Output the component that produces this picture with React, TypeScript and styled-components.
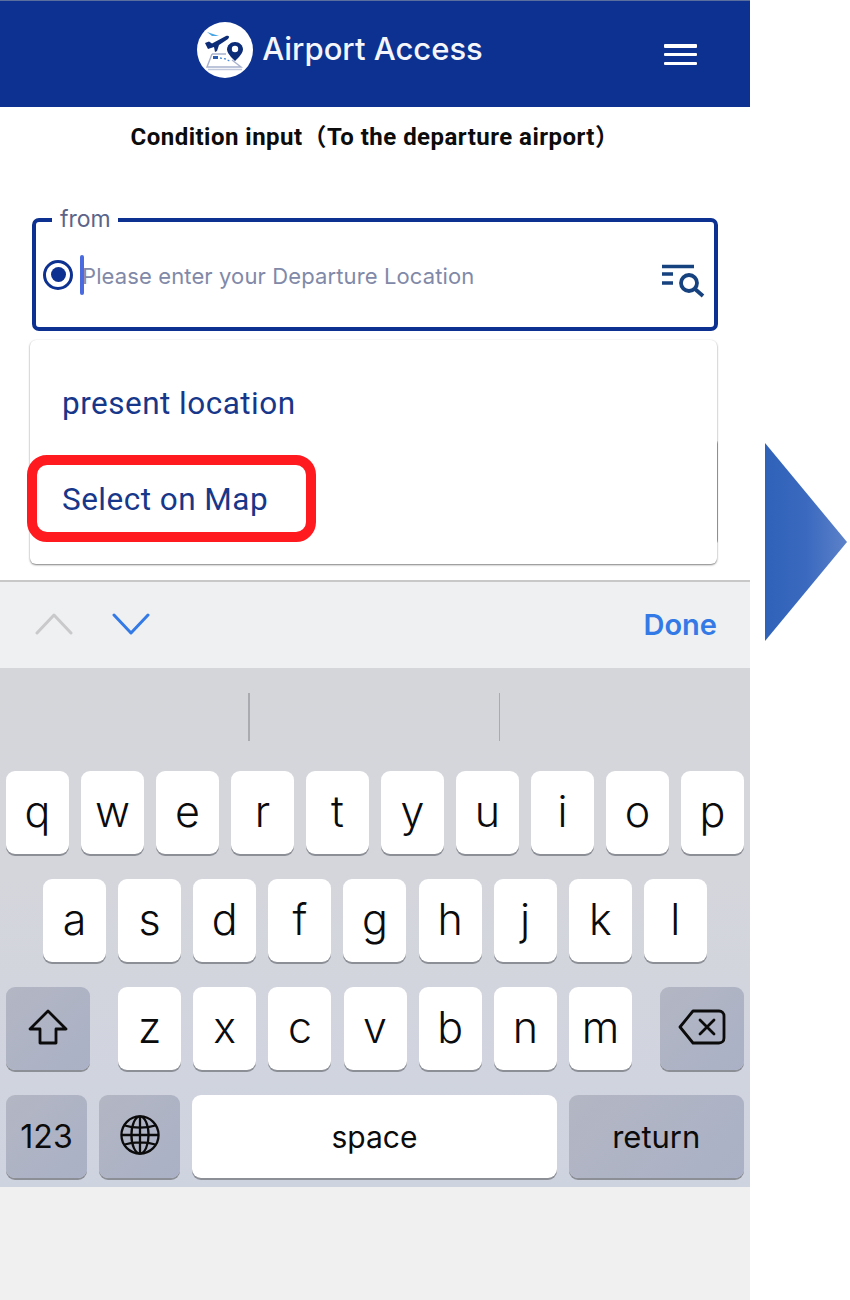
import React from "react";
import styled, { createGlobalStyle } from "styled-components";

const Global = createGlobalStyle`
  html, body { margin: 0; padding: 0; background: #fff; }
  * { box-sizing: border-box; }
`;

const Page = styled.div`
  width: 850px;
  height: 1300px;
  display: flex;
  align-items: flex-start;
  overflow: hidden;
  font-family: Roboto, "Liberation Sans", sans-serif;
`;

const Phone = styled.div`
  width: 750px;
  height: 1300px;
  flex: none;
  display: flex;
  flex-direction: column;
  background: #fff;
`;

const Header = styled.header`
  height: 107px;
  flex: none;
  background: #0c3190;
  border-top: 1px solid #5b6f9f;
  position: relative;
  display: flex;
  align-items: center;
  justify-content: center;
  padding-right: 70px;
  padding-bottom: 8px;
  gap: 9px;
  color: #fff;
`;

const Brand = styled.span`
  font-family: Inter, sans-serif;
  font-size: 31px;
  font-weight: 500;
  color: #f4f6fb;
  margin-top: -3px;
`;

const Burger = styled.button`
  position: absolute;
  left: 664px;
  top: 43px;
  width: 33px;
  height: 21px;
  padding: 0;
  border: 0;
  background: transparent;
  display: flex;
  flex-direction: column;
  justify-content: space-between;
  span { display: block; height: 3.5px; background: #fff; border-radius: 1px; }
`;

const Title = styled.h1`
  margin: 0;
  height: 60px;
  padding-top: 13px;
  text-align: center;
  font-size: 24px;
  line-height: 34px;
  font-weight: 700;
  letter-spacing: 0.47px;
  color: #0c0c0c;
  font-family: Roboto, "Noto Sans CJK JP", sans-serif;
`;

const FormArea = styled.div`
  position: relative;
  height: 413px;
  flex: none;
  padding: 51px 32px 0 32px;
`;

const Field = styled.div`
  position: relative;
  height: 113px;
  border: 4px solid #0d3190;
  border-radius: 7px;
  display: flex;
  align-items: center;
  padding: 0 9px 0 7px;
`;

const Legend = styled.span`
  position: absolute;
  left: 16px;
  top: -18px;
  padding: 0 7px 0 8px;
  background: #fff;
  font-family: Inter, sans-serif;
  font-size: 23px;
  line-height: 30px;
  color: #5c6488;
`;

const Radio = styled.span`
  width: 30px;
  height: 30px;
  flex: none;
  border: 3px solid #0d3190;
  border-radius: 50%;
  display: flex;
  align-items: center;
  justify-content: center;
  &::after {
    content: "";
    width: 15px;
    height: 15px;
    border-radius: 50%;
    background: #0d3190;
  }
`;

const Caret = styled.span`
  width: 4px;
  height: 40px;
  flex: none;
  margin-left: 7px;
  border-radius: 2px;
  background: #4a6be0;
`;

const Placeholder = styled.span`
  flex: 1;
  font-family: Inter, sans-serif;
  font-size: 22px;
  letter-spacing: 0.12px;
  color: #8189a8;
  margin: 2px 0 0 -2px;
`;

const SearchSlot = styled.span`
  display: flex;
  flex: none;
  margin-top: 12px;
`;

const Menu = styled.div`
  position: absolute;
  left: 30px;
  top: 173px;
  width: 687px;
  height: 224px;
  background: #fff;
  border-radius: 6px;
  box-shadow: 0 1px 2px rgba(0, 0, 0, 0.5), 0 0 1px rgba(0, 0, 0, 0.08);
  padding-top: 15px;
  z-index: 2;
`;

const MenuItem = styled.div`
  height: 96px;
  display: flex;
  align-items: center;
  padding-left: 32px;
  font-family: Roboto, sans-serif;
  font-size: 31.5px;
  letter-spacing: 0.48px;
  color: #17378a;
`;

const SecondField = styled.div`
  position: absolute;
  left: 33px;
  top: 271px;
  width: 685px;
  height: 108px;
  border: 2px solid #a8a8a8;
  border-radius: 6px;
`;

const Highlight = styled.div`
  position: absolute;
  left: 27px;
  top: 288px;
  width: 289px;
  height: 87px;
  border: 10px solid #fe1a1f;
  border-radius: 20px;
  z-index: 3;
`;

const Toolbar = styled.div`
  height: 88px;
  flex: none;
  background: #eff0f2;
  border-top: 2px solid #c8c8c8;
  display: flex;
  align-items: center;
  justify-content: space-between;
  padding: 0 33px 0 35px;
`;

const Arrows = styled.div`
  display: flex;
  align-items: center;
  gap: 39px;
  margin-top: -2px;
`;

const Done = styled.span`
  font-family: Inter, sans-serif;
  font-size: 29px;
  font-weight: 600;
  color: #337ae6;
  margin-top: -1px;
`;

const Keyboard = styled.div`
  height: 519px;
  flex: none;
  background: linear-gradient(180deg, #d5d6da 0%, #d5d6dc 40%, #ced3e0 100%);
  display: flex;
  flex-direction: column;
`;

const Suggestions = styled.div`
  height: 103px;
  flex: none;
  display: flex;
  padding-top: 25px;
  padding-left: 248px;
  gap: 249px;
`;

const Divider = styled.span`
  width: 1.5px;
  height: 48px;
  background: #a9abb0;
`;

const Rows = styled.div`
  display: flex;
  flex-direction: column;
  gap: 24px;
`;

const Row = styled.div<{ $inset?: number; $gap?: number }>`
  display: flex;
  height: 84px;
  padding: 0 6px 0 ${(p) => p.$inset ?? 6}px;
  gap: ${(p) => p.$gap ?? 12}px;
`;

const Key = styled.div<{
  $w?: number;
  $dark?: boolean;
  $size?: number;
  $before?: number;
  $after?: number;
  $word?: boolean;
}>`
  width: ${(p) => p.$w ?? 63}px;
  height: 83px;
  flex: none;
  margin-left: ${(p) => p.$before ?? 0}px;
  margin-right: ${(p) => p.$after ?? 0}px;
  border-radius: 9px;
  background: ${(p) => (p.$dark ? "linear-gradient(135deg, #b3b6c3, #aab1c6)" : "#fff")};
  box-shadow: 0 2px 0 #8c8f96;
  display: flex;
  align-items: center;
  justify-content: center;
  font-family: Inter, "Liberation Sans", sans-serif;
  font-weight: ${(p) => (p.$word ? 400 : 300)};
  font-size: ${(p) => p.$size ?? 43}px;
  color: #0b0b0b;
  padding-bottom: ${(p) => (p.$word ? 0 : 4)}px;
`;

const Bottom = styled.div`
  flex: 1;
  background: #f0f0f0;
`;

const ArrowColumn = styled.div`
  padding: 443px 0 0 15px;
`;

const Logo = () => (
  <svg width="56" height="56" viewBox="0 0 56 56">
    <circle cx="28" cy="28" r="28" fill="#fff" />
    <path d="M10 10 L22 14 L15 14 Z" fill="#49a6e6" />
    <path d="M8 21 L12 19.5 L15 21.5 L29 14 C32 13 33 15 31 17 L22 23 L20 29 L18 30 L17 25 L11 27 Z" fill="#0c2c78" />
    <path d="M38 20 C33.5 20 30 23.5 30 27.5 C30 32 38 39 38 39 C38 39 46 32 46 27.5 C46 23.5 42.5 20 38 20 Z" fill="#0c2c78" />
    <circle cx="38" cy="27" r="3.2" fill="#fff" />
    <path d="M15 32 L29 32 M35 38 L44 45 L10 45 L15 32" fill="none" stroke="#a8b2cf" strokeWidth="1.4" />
    <path d="M11 47.5 L45 47.5" stroke="#c3cade" strokeWidth="1.6" />
    <rect x="16" y="34" width="5" height="3" fill="#2a5db0" />
    <path d="M23 36 L29 37 L34 40" stroke="#4b8fdc" strokeWidth="1.3" strokeDasharray="2 2" fill="none" />
  </svg>
);

const SearchList = () => (
  <svg width="44" height="34" viewBox="0 0 44 34" fill="none" stroke="#16427f">
    <path d="M1 2.5 L33 2.5 M1 10 L12 10 M1 19 L12 19" strokeWidth="3.4" />
    <circle cx="28" cy="19" r="8" strokeWidth="3.8" />
    <path d="M34 25 L42 32" strokeWidth="3.8" />
  </svg>
);

const Chevron = ({ up, color }: { up?: boolean; color: string }) => (
  <svg width="38" height="24" viewBox="0 0 38 24" fill="none" stroke={color} strokeWidth="3" strokeLinecap="round" strokeLinejoin="round">
    <path d={up ? "M2 21 L19 3 L36 21" : "M2 3 L19 21 L36 3"} />
  </svg>
);

const ShiftIcon = () => (
  <svg width="40" height="36" viewBox="0 0 40 36" fill="none" stroke="#0b0b0b" strokeWidth="2.8" strokeLinejoin="round">
    <path d="M20 2 L38 20 L28 20 L28 34 L12 34 L12 20 L2 20 Z" />
  </svg>
);

const BackspaceIcon = () => (
  <svg width="48" height="36" viewBox="0 0 48 36" fill="none" stroke="#0b0b0b" strokeWidth="2.8" strokeLinejoin="round" strokeLinecap="round">
    <path d="M15 2 L41 2 C44 2 46 4 46 7 L46 29 C46 32 44 34 41 34 L15 34 L2 18 Z" />
    <path d="M22 11 L36 25 M36 11 L22 25" />
  </svg>
);

const GlobeIcon = () => (
  <svg width="40" height="40" viewBox="0 0 42 42" fill="none" stroke="#0b0b0b" strokeWidth="2.4">
    <circle cx="21" cy="21" r="19.5" />
    <ellipse cx="21" cy="21" rx="9" ry="19.5" />
    <path d="M21 2 L21 40 M2 21 L40 21 M5 11 C14 14 28 14 37 11 M5 31 C14 28 28 28 37 31" />
  </svg>
);

const Triangle = () => (
  <svg width="82" height="198" viewBox="0 0 82 198">
    <defs>
      <linearGradient id="tri" x1="0" x2="1" y1="0" y2="0">
        <stop offset="0" stopColor="#2f62b9" />
        <stop offset="0.5" stopColor="#3a69bf" />
        <stop offset="1" stopColor="#5d82c9" />
      </linearGradient>
    </defs>
    <path d="M0 0 L82 99 L0 198 Z" fill="url(#tri)" />
  </svg>
);

const row1 = ["q", "w", "e", "r", "t", "y", "u", "i", "o", "p"];
const row2 = ["a", "s", "d", "f", "g", "h", "j", "k", "l"];
const row3 = ["z", "x", "c", "v", "b", "n", "m"];

export default function App() {
  return (
    <Page>
      <Global />
      <Phone>
        <Header>
          <Logo />
          <Brand>Airport Access</Brand>
          <Burger aria-label="menu"><span /><span /><span /></Burger>
        </Header>
        <Title>Condition input（To the departure airport）</Title>
        <FormArea>
          <Field>
            <Legend>from</Legend>
            <Radio />
            <Caret />
            <Placeholder>Please enter your Departure Location</Placeholder>
            <SearchSlot><SearchList /></SearchSlot>
          </Field>
          <SecondField />
          <Menu>
            <MenuItem>present location</MenuItem>
            <MenuItem>Select on Map</MenuItem>
          </Menu>
          <Highlight />
        </FormArea>
        <Toolbar>
          <Arrows>
            <Chevron up color="#c9c9cb" />
            <Chevron color="#337ae6" />
          </Arrows>
          <Done>Done</Done>
        </Toolbar>
        <Keyboard>
          <Suggestions>
            <Divider />
            <Divider />
          </Suggestions>
          <Rows>
            <Row>{row1.map((k) => <Key key={k}>{k}</Key>)}</Row>
            <Row $inset={43} $gap={12.12}>{row2.map((k) => <Key key={k}>{k}</Key>)}</Row>
            <Row $gap={12.15}>
              <Key $dark $w={84} $after={16}><ShiftIcon /></Key>
              {row3.map((k) => <Key key={k}>{k}</Key>)}
              <Key $dark $w={84} $before={16}><BackspaceIcon /></Key>
            </Row>
            <Row $gap={11.75}>
              <Key $dark $w={81} $size={32} $word>123</Key>
              <Key $dark $w={81.5}><GlobeIcon /></Key>
              <Key $w={365} $size={30} $word>space</Key>
              <Key $dark $w={175} $size={31} $word>return</Key>
            </Row>
          </Rows>
        </Keyboard>
        <Bottom />
      </Phone>
      <ArrowColumn><Triangle /></ArrowColumn>
    </Page>
  );
}
